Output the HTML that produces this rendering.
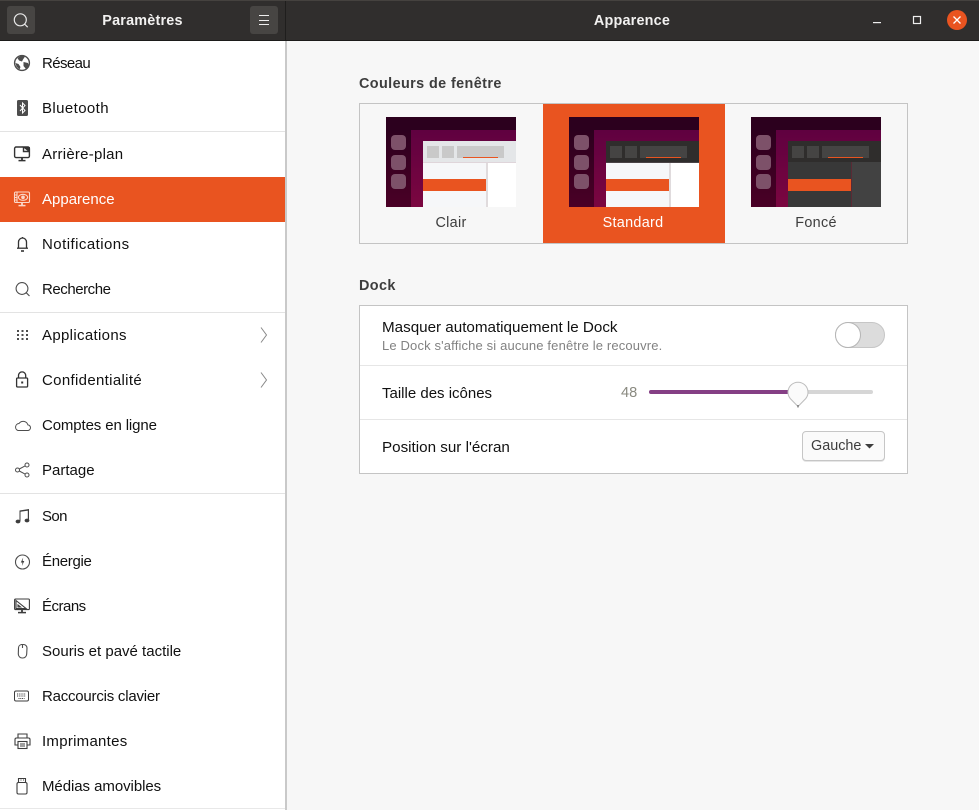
<!DOCTYPE html>
<html lang="fr"><head><meta charset="utf-8"><title>Apparence</title>
<style>
html,body{margin:0;padding:0;width:979px;height:810px;overflow:hidden;background:#f7f7f7;font-family:"Liberation Sans",sans-serif;font-size:15px;color:#111}
.a{position:absolute}
#hdr{left:0;top:0;width:979px;background:#302e2d;border-bottom:1px solid #1c1b1a;border-top:1px solid #45423f;box-sizing:border-box;height:41px}
.hb{width:28px;height:28px;border-radius:3px;background:#474543;top:6px}
.tt{color:#f2f1f0;font-weight:bold;font-size:14.4px;top:13px;text-align:center;letter-spacing:.2px}
#side{left:0;top:41px;width:285px;height:769px;background:#fff}
#sb{left:285px;top:41px;width:2px;height:769px;background:#c9c9c9}
.r{position:absolute;left:42px;line-height:18px;white-space:nowrap;color:#111}
.sep{position:absolute;left:0;width:285px;height:1px;background:#e3e3e3}
.ic{position:absolute;left:13px;width:20px;height:20px;overflow:visible}
.sect{font-weight:bold;color:#3d3d3d;font-size:14.4px;letter-spacing:.4px}
.box{border:1px solid #c4c4c4;box-sizing:border-box}
.lab{color:#3d3d3d;text-align:center;font-size:14.4px;letter-spacing:.3px}
</style></head><body>
<svg width="0" height="0" style="position:absolute"><defs>
<linearGradient id="bg" x1="0" y1="0" x2="0" y2="1"><stop offset="0" stop-color="#5b0040"/><stop offset="1" stop-color="#7b0640"/></linearGradient>
<linearGradient id="dk" x1="0" y1="0" x2="0" y2="1"><stop offset="0" stop-color="#2c001e"/><stop offset="1" stop-color="#4a0026"/></linearGradient>
<g id="base">
<rect width="130" height="90" fill="url(#bg)"/>
<rect width="130" height="13" fill="#2c001e"/>
<rect y="13" width="25" height="77" fill="url(#dk)"/>
<rect x="5" y="18" width="15" height="15" rx="4" fill="#7d5169"/>
<rect x="5" y="38" width="15" height="15" rx="4" fill="#7d5169"/>
<rect x="5" y="57" width="15" height="15" rx="4" fill="#7d5169"/>
</g></defs></svg>

<div class="a" id="hdr"></div>
<div class="a hb" style="left:7px"></div>
<svg class="a" style="left:13px;top:13px" width="16" height="16" fill="none" stroke="#e8e8e8" stroke-width="1.2"><circle cx="7.3" cy="6.8" r="6"/><path d="M11.5 11l3.2 3.2"/></svg>
<div class="a tt" style="left:60px;width:165px">Paramètres</div>
<div class="a hb" style="left:250px"></div>
<svg class="a" style="left:258px;top:14px" width="13" height="12" stroke="#eee" stroke-width="1"><path d="M1 1.5h10M1 6.5h10M1 10.5h10"/></svg>
<div class="a" style="left:285px;top:1px;width:1px;height:39px;background:#1f1e1d"></div>
<div class="a tt" style="left:532px;width:200px">Apparence</div>
<svg class="a" style="left:871px;top:15px" width="14" height="10"><rect x="2" y="7" width="8" height="1.2" fill="#eee"/></svg>
<svg class="a" style="left:912px;top:15px" width="10" height="10" fill="none" stroke="#eee" stroke-width="1.2"><rect x="1.5" y="1.5" width="7" height="7"/></svg>
<div class="a" style="left:947px;top:10px;width:20px;height:20px;border-radius:50%;background:#e95420"></div>
<svg class="a" style="left:953px;top:16px" width="8" height="8" stroke="#fff" stroke-width="1.3"><path d="M.5.5l7 7M7.5.5l-7 7"/></svg>

<div class="a" id="side"></div><div class="a" id="sb"></div>
<div class="a" style="left:0;top:177px;width:285px;height:45px;background:#e95420"></div>
<div class="sep" style="top:131px"></div>
<div class="sep" style="top:312px"></div>
<div class="sep" style="top:493px"></div>
<div class="sep" style="top:808px;background:#e8e8e8"></div>

<!-- labels -->
<div class="r" style="top:55px;letter-spacing:-.6px">Réseau</div>
<div class="r" style="top:100px;letter-spacing:.4px">Bluetooth</div>
<div class="r" style="top:146px;letter-spacing:.25px">Arrière-plan</div>
<div class="r" style="top:191px;color:#fff">Apparence</div>
<div class="r" style="top:236px;letter-spacing:.45px">Notifications</div>
<div class="r" style="top:281px;letter-spacing:-.45px">Recherche</div>
<div class="r" style="top:327px;letter-spacing:.33px">Applications</div>
<div class="r" style="top:372px;letter-spacing:.33px">Confidentialité</div>
<div class="r" style="top:417px;letter-spacing:-.12px">Comptes en ligne</div>
<div class="r" style="top:462px">Partage</div>
<div class="r" style="top:508px;letter-spacing:-.6px">Son</div>
<div class="r" style="top:553px;letter-spacing:-.3px">Énergie</div>
<div class="r" style="top:598px;letter-spacing:-.5px">Écrans</div>
<div class="r" style="top:643px">Souris et pavé tactile</div>
<div class="r" style="top:688px;letter-spacing:-.22px">Raccourcis clavier</div>
<div class="r" style="top:733px;letter-spacing:.27px">Imprimantes</div>
<div class="r" style="top:778px;letter-spacing:-.06px">Médias amovibles</div>

<!-- icons (each 20x20 box centred on row) -->
<svg class="ic" style="top:53px" viewBox="0 0 20 20"><circle cx="9" cy="10" r="7.4" fill="none" stroke="#4d4d4d" stroke-width="1.4"/><path d="M4.5 5l4-2.5 3.5 1-2 3-1 2-3-1zM10.5 9l4.5 1 1 3-3 3-2.5-3zM2.5 10l3 1 2 3-1 2.5-3-3z" fill="#4d4d4d"/></svg>
<svg class="ic" style="top:98px" viewBox="0 0 20 20"><rect x="4" y="2" width="11" height="16" rx="1.5" fill="#4d4d4d"/><path d="M7 7l5 5.5-2.5 2.5V5l2.5 2.5L7 13" fill="none" stroke="#fff" stroke-width="1"/></svg>
<svg class="ic" style="top:144px" viewBox="0 0 20 20" fill="none" stroke="#333" stroke-width="1.4"><rect x="1.6" y="3" width="14.8" height="10.6" rx="1.5"/><path d="M10.5 3v4.5h6" /><path d="M11 3.2l5.2 4V3.6z" fill="#333"/><path d="M9 14v2" stroke-width="1.8"/><path d="M5.5 16.6h7" stroke-width="1.5"/></svg>
<svg class="ic" style="top:189px" viewBox="0 0 20 20" fill="none" stroke="#fbd8c9" stroke-width="1.1"><rect x="1.5" y="3" width="15" height="10.5" rx="1.3"/><path d="M4 3v10.5M1.5 6h2.5M1.5 8.5h2.5M1.5 11h2.5"/><ellipse cx="10" cy="8.3" rx="4.6" ry="3"/><circle cx="10" cy="8.3" r="1.3" fill="#fbd8c9"/><path d="M9 14v2" stroke-width="1.8"/><path d="M5.5 16.6h7" stroke-width="1.5"/></svg>
<svg class="ic" style="top:234px" viewBox="0 0 20 20" fill="none" stroke="#333" stroke-width="1.3"><path d="M5.5 14V8a4 4 0 0 1 8 0v6"/><path d="M4 14.2h11"/><path d="M8 17h3" stroke-width="1.6"/><path d="M9.5 3v1"/></svg>
<svg class="ic" style="top:279px" viewBox="0 0 20 20" fill="none" stroke="#4d4d4d" stroke-width="1.1"><circle cx="9" cy="9.5" r="5.9"/><path d="M13.2 13.7l3.3 3.3"/></svg>
<svg class="ic" style="top:325px" viewBox="0 0 20 20" fill="#4d4d4d"><rect x="4" y="5" width="2" height="2"/><rect x="8.5" y="5" width="2" height="2"/><rect x="13" y="5" width="2" height="2"/><rect x="4" y="9" width="2" height="2"/><rect x="8.5" y="9" width="2" height="2"/><rect x="13" y="9" width="2" height="2"/><rect x="4" y="13" width="2" height="2"/><rect x="8.5" y="13" width="2" height="2"/><rect x="13" y="13" width="2" height="2"/></svg>
<svg class="ic" style="top:369px" viewBox="0 0 20 20" fill="none" stroke="#333" stroke-width="1.3"><rect x="3.6" y="9" width="11" height="9" rx="1"/><path d="M5.5 9V6.5a3.6 3.6 0 0 1 7.2 0V9"/><rect x="8.2" y="12.5" width="2" height="2" fill="#333" stroke="none"/></svg>
<svg class="ic" style="top:415px" viewBox="0 0 20 20" fill="none" stroke="#4d4d4d" stroke-width="1"><path d="M5 15.5h9.5a2.8 2.8 0 0 0 .4-5.6A5 5 0 0 0 6 8.5a3.6 3.6 0 0 0-1 7z"/></svg>
<svg class="ic" style="top:460px" viewBox="0 0 20 20" fill="none" stroke="#4d4d4d" stroke-width="1"><circle cx="4.5" cy="10" r="2"/><circle cx="14" cy="5" r="2"/><circle cx="14" cy="15" r="2"/><path d="M6.3 9l6-3.2M6.3 11l6 3.2"/></svg>
<svg class="ic" style="top:506px" viewBox="0 0 20 20" fill="#3d3d3d"><path d="M6.5 4.5L16 3v1.5l-8.5 1.2V15H6.5zM14.8 4.5h1.2V14h-1.2z"/><ellipse cx="5" cy="15.5" rx="2.4" ry="1.9"/><ellipse cx="14" cy="14.5" rx="2.4" ry="1.9"/></svg>
<svg class="ic" style="top:551px" viewBox="0 0 20 20"><circle cx="9.5" cy="11" r="7" fill="none" stroke="#4d4d4d" stroke-width="1.1"/><path d="M10.2 6.5L7.8 11.5h1.7l-.6 3.5 2.4-5H9.6z" fill="#3d3d3d"/></svg>
<svg class="ic" style="top:596px" viewBox="0 0 20 20" fill="none" stroke="#3d3d3d" stroke-width="1.1"><rect x="1.6" y="3" width="14.8" height="10.6" rx="1"/><path d="M3 4.5l10 8H3zM5 9v2h2.5z"/><path d="M9 14v2" stroke-width="1.8"/><path d="M5 16.6h8" stroke-width="1.5"/></svg>
<svg class="ic" style="top:641px" viewBox="0 0 20 20" fill="none" stroke="#4d4d4d" stroke-width="1.1"><path d="M8.5 3.5h2a3.5 3.5 0 0 1 3.5 3.5l-.3 6a4 4 0 0 1-4 4h-.4a4 4 0 0 1-4-4L5.5 7a3.5 3.5 0 0 1 3-3.5z"/><path d="M9.5 4v3"/></svg>
<svg class="ic" style="top:686px" viewBox="0 0 20 20" fill="none" stroke="#3d3d3d" stroke-width="1"><rect x="1.5" y="5" width="14" height="10" rx="1.5"/><path d="M4 8h9M4 10h9M5.5 12.5h6" stroke-dasharray="1 .8"/></svg>
<svg class="ic" style="top:731px" viewBox="0 0 20 20" fill="none" stroke="#3d3d3d" stroke-width="1.1"><path d="M5 7V3h9v4"/><path d="M4.5 14H2V8.5A1.5 1.5 0 0 1 3.5 7h12A1.5 1.5 0 0 1 17 8.5V14h-2.5"/><rect x="5" y="10.5" width="9" height="7"/><path d="M7 13h5M7 15h5"/></svg>
<svg class="ic" style="top:776px" viewBox="0 0 20 20" fill="none" stroke="#3d3d3d" stroke-width="1.1"><rect x="4" y="6.5" width="10" height="11.5" rx="1.5"/><path d="M5.5 6V2.5h7V6"/><path d="M7.5 4h1M10 4h1" stroke-width="1"/></svg>

<svg class="a" style="left:259px;top:326px" width="10" height="18" fill="none" stroke="#888" stroke-width="1"><path d="M2 1.5l5.5 7.5-5.5 7.5"/></svg>
<svg class="a" style="left:259px;top:371px" width="10" height="18" fill="none" stroke="#888" stroke-width="1"><path d="M2 1.5l5.5 7.5-5.5 7.5"/></svg>

<!-- main -->
<div class="a sect" style="left:359px;top:76px">Couleurs de fenêtre</div>
<div class="a box" style="left:359px;top:103px;width:549px;height:141px"></div>
<div class="a" style="left:543px;top:104px;width:182px;height:139px;background:#e95420"></div>

<svg class="a" style="left:386px;top:117px" width="130" height="90"><use href="#base"/>
<rect x="37" y="24" width="93" height="66" fill="#f6f7f9"/><rect x="37" y="24" width="93" height="21" fill="#e4e6e8"/><rect x="37" y="45" width="93" height="1" fill="#dfd5da"/>
<rect x="41" y="29" width="12" height="12" fill="#c9c9c9"/><rect x="56" y="29" width="12" height="12" fill="#c9c9c9"/><rect x="71" y="29" width="47" height="12" fill="#c9c9c9"/><rect x="77" y="40" width="35" height="1" fill="#e95420"/>
<rect x="100" y="46" width="2" height="44" fill="#e0dbdd"/><rect x="102" y="46" width="28" height="44" fill="#fff"/><rect x="37" y="62" width="63" height="12" fill="#e95420"/></svg>

<svg class="a" style="left:569px;top:117px" width="130" height="90"><use href="#base"/>
<rect x="37" y="24" width="93" height="66" fill="#f6f7f9"/><rect x="37" y="24" width="93" height="21" fill="#2f2d2c"/><rect x="37" y="45" width="93" height="1" fill="#4a4346"/>
<rect x="41" y="29" width="12" height="12" fill="#454443"/><rect x="56" y="29" width="12" height="12" fill="#454443"/><rect x="71" y="29" width="47" height="12" fill="#454443"/><rect x="77" y="40" width="35" height="1" fill="#e95420"/>
<rect x="100" y="46" width="2" height="44" fill="#e0dbdd"/><rect x="102" y="46" width="28" height="44" fill="#fff"/><rect x="37" y="62" width="63" height="12" fill="#e95420"/></svg>

<svg class="a" style="left:751px;top:117px" width="130" height="90"><use href="#base"/>
<rect x="37" y="24" width="93" height="66" fill="#383838"/><rect x="37" y="24" width="93" height="21" fill="#2f2d2c"/>
<rect x="41" y="29" width="12" height="12" fill="#454443"/><rect x="56" y="29" width="12" height="12" fill="#454443"/><rect x="71" y="29" width="47" height="12" fill="#454443"/><rect x="77" y="40" width="35" height="1" fill="#e95420"/>
<rect x="100" y="45" width="1" height="45" fill="#5a2a35"/><rect x="101" y="45" width="29" height="45" fill="#424242"/><rect x="37" y="62" width="63" height="12" fill="#e95420"/></svg>

<div class="a lab" style="left:386px;width:130px;top:215px">Clair</div>
<div class="a lab" style="left:568px;width:130px;top:215px;color:#fff">Standard</div>
<div class="a lab" style="left:751px;width:130px;top:215px">Foncé</div>

<div class="a sect" style="left:359px;top:278px">Dock</div>
<div class="a box" style="left:359px;top:305px;width:549px;height:169px;background:#fff"></div>
<div class="a" style="left:360px;top:365px;width:547px;height:1px;background:#e6e6e6"></div>
<div class="a" style="left:360px;top:419px;width:547px;height:1px;background:#e6e6e6"></div>

<div class="a" style="left:382px;top:319px;font-size:15.2px;white-space:nowrap">Masquer automatiquement le Dock</div>
<div class="a" style="left:382px;top:338px;font-size:13px;color:#828282;white-space:nowrap;letter-spacing:.15px">Le Dock s'affiche si aucune fenêtre le recouvre.</div>
<div class="a" style="left:835px;top:322px;width:50px;height:26px;border-radius:13px;background:#dcdcdc;border:1px solid #c6c6c6;box-sizing:border-box"></div>
<div class="a" style="left:835px;top:322px;width:26px;height:26px;border-radius:50%;background:#fff;border:1px solid #b5b5b5;box-sizing:border-box"></div>

<div class="a" style="left:382px;top:385px;white-space:nowrap">Taille des icônes</div>
<div class="a" style="left:621px;top:385px;font-size:14.6px;color:#8a8a80;white-space:nowrap">48</div>
<div class="a" style="left:649px;top:390px;width:224px;height:4px;border-radius:2px;background:#d6d6d6"></div>
<div class="a" style="left:649px;top:390px;width:145px;height:4px;border-radius:2px;background:#853f85"></div>
<svg class="a" style="left:787px;top:381px" width="22" height="27"><path d="M11 25.5L3.2 17.5a10 10 0 1 1 15.6 0z" fill="#fbfbfb" stroke="#bdbdbd"/><path d="M11 24v2.5" stroke="#555"/></svg>

<div class="a" style="left:382px;top:439px;font-size:15.2px;white-space:nowrap">Position sur l'écran</div>
<div class="a" style="left:802px;top:431px;width:83px;height:30px;border:1px solid #c6c6c6;border-radius:4px;background:#fafafa;box-sizing:border-box;box-shadow:0 1px 0 #e6e6e6"></div>
<div class="a" style="left:811px;top:438px;font-size:14.4px;color:#3d3d3d;white-space:nowrap">Gauche</div>
<svg class="a" style="left:865px;top:444px" width="10" height="6"><path d="M0 0h9L4.5 4.5z" fill="#3d3d3d"/></svg>
</body></html>
